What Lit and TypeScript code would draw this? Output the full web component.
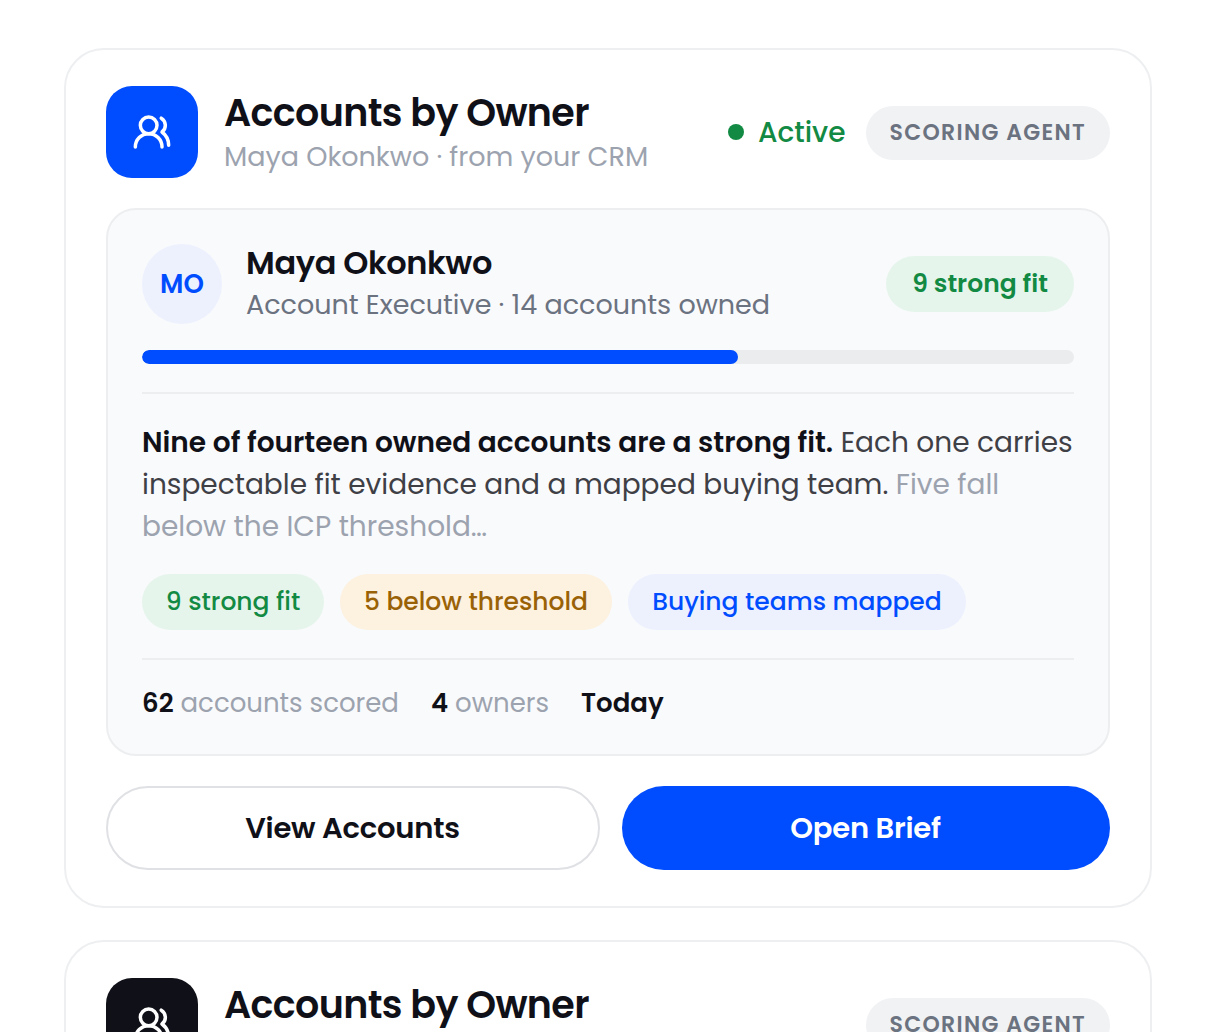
import { LitElement, html, css } from 'lit';
import { customElement, property } from 'lit/decorators.js';
import { classMap } from 'lit/directives/class-map.js';

const OWNER = {
  initials: 'MO',
  name: 'Maya Okonkwo',
  role: 'Account Executive · 14 accounts owned',
  progress: 64,
};

const CHIPS = [
  { tone: 'green', label: '9 strong fit' },
  { tone: 'amber', label: '5 below threshold' },
  { tone: 'blue', label: 'Buying teams mapped' },
];

@customElement('owner-card')
export class OwnerCard extends LitElement {
  static styles = css`
  :host {
    display: block;
    box-sizing: border-box;
    padding: 36px 40px;
    border: 2px solid #eeeff1;
    border-radius: 40px;
    background: #fff;
  }

  * {
    box-sizing: border-box;
  }

  .header {
    display: flex;
    align-items: center;
    height: 92px;
    margin-bottom: 30px;
  }

  .tile {
    display: flex;
    align-items: center;
    justify-content: center;
    flex: none;
    width: 92px;
    height: 92px;
    margin-right: 26px;
    border-radius: 26px;
    background: #004dff;
  }

  .tile.dark {
    background: #101118;
  }

  .heading {
    flex: 1;
    white-space: nowrap;
  }

  .title {
    font-size: 38px;
    line-height: 50px;
    font-weight: 600;
    letter-spacing: -0.0165em;
  }

  .subtitle {
    font-size: 27px;
    line-height: 38px;
    color: #9ca3af;
  }

  .status {
    display: flex;
    align-items: center;
    gap: 14px;
    margin: 2px 20px 0 0;
    font-size: 28px;
    font-weight: 500;
    color: #128a43;
  }

  .dot {
    width: 16px;
    height: 16px;
    margin-bottom: 2px;
    border-radius: 50%;
    background: #128a43;
  }

  .badge {
    display: flex;
    align-items: center;
    height: 54px;
    margin-top: 2px;
    padding: 0 24px 1px;
    border-radius: 27px;
    background: #f1f2f4;
    color: #6b7280;
    font-size: 22px;
    font-weight: 600;
    letter-spacing: 0.06em;
    white-space: nowrap;
  }

  .panel {
    height: 548px;
    padding: 34px;
    border: 2px solid #edeef0;
    border-radius: 30px;
    background: #f9fafc;
  }

  .owner {
    display: flex;
    align-items: center;
    height: 80px;
  }

  .avatar {
    display: flex;
    align-items: center;
    justify-content: center;
    width: 80px;
    height: 80px;
    margin-right: 24px;
    border-radius: 50%;
    background: #edf1fe;
    color: #004dff;
    font-size: 26px;
    font-weight: 600;
  }

  .name {
    font-size: 32px;
    line-height: 40px;
    font-weight: 600;
    letter-spacing: -0.012em;
  }

  .role {
    padding-top: 1px;
    margin-bottom: -1px;
    font-size: 27px;
    line-height: 42px;
    color: #6b7280;
  }

  .track {
    height: 14px;
    margin: 26px 0 28px;
    border-radius: 7px;
    background: #ebecee;
    overflow: hidden;
  }

  .fill {
    height: 100%;
    border-radius: 7px;
    background: #004dff;
  }

  .brief {
    padding-top: 28px;
    border-top: 2px solid #edeef0;
    font-size: 28px;
    line-height: 42px;
    color: #3f4046;
    white-space: nowrap;
  }

  .brief b {
    font-weight: 600;
    color: #101118;
  }

  .brief .muted {
    color: #9ca3af;
  }

  .chips {
    display: flex;
    gap: 16px;
    margin: 26px 0 28px;
  }

  .chip {
    display: flex;
    align-items: center;
    justify-content: center;
    height: 56px;
    padding-bottom: 1px;
    border-radius: 28px;
    font-size: 25px;
    font-weight: 500;
    white-space: nowrap;
  }

  .chip.green {
    width: 182px;
    background: #e6f5ec;
    color: #128a43;
  }

  .chip.amber {
    width: 272px;
    background: #fdf1df;
    color: #9a6206;
  }

  .chip.blue {
    width: 338px;
    background: #edf1fe;
    color: #004dff;
  }

  .chip.score {
    width: 188px;
    font-weight: 600;
  }

  .stats {
    display: flex;
    gap: 32px;
    padding-top: 24px;
    border-top: 2px solid #edeef0;
    font-size: 26px;
    line-height: 38px;
    color: #9ca3af;
  }

  .stats b {
    font-weight: 600;
    color: #101118;
  }

  .actions {
    display: grid;
    grid-template-columns: 494fr 488fr;
    gap: 22px;
    margin-top: 30px;
  }

  .button {
    height: 84px;
    padding: 1px 1px 0 0;
    border: 2px solid #e0e1e5;
    border-radius: 42px;
    background: #fff;
    color: #101118;
    font: inherit;
    font-size: 29px;
    font-weight: 600;
    letter-spacing: -0.008em;
  }

  .button.primary {
    border: none;
    background: #004dff;
    color: #fff;
  }
  `;

  @property({ type: Boolean }) active = false;

  renderHeader() {
    return html`
      <div class="header">
        <div class=${classMap({ tile: true, dark: !this.active })}>
          <svg width="40" height="40" viewBox="0 0 24 24" fill="none" stroke="#fff" stroke-width="2.1" stroke-linecap="round" stroke-linejoin="round">
            <path d="M18 21a8 8 0 0 0-16 0"></path>
            <circle cx="10" cy="8" r="5"></circle>
            <path d="M22 20c0-3.37-2-6.5-4-8a5 5 0 0 0-.45-8.3"></path>
          </svg>
        </div>
        <div class="heading">
          <div class="title">Accounts by Owner</div>
          <div class="subtitle">${OWNER.name} · from your CRM</div>
        </div>
        ${this.active ? html`<div class="status"><span class="dot"></span>Active</div>` : ''}
        <div class="badge">SCORING AGENT</div>
      </div>`;
  }

  render() {
    return html`
      ${this.renderHeader()}
      <div class="panel">
        <div class="owner">
          <div class="avatar">${OWNER.initials}</div>
          <div class="heading">
            <div class="name">${OWNER.name}</div>
            <div class="role">${OWNER.role}</div>
          </div>
          <div class="chip green score">9 strong fit</div>
        </div>
        <div class="track"><div class="fill" style="width: ${OWNER.progress}%"></div></div>
        <div class="brief">
          <b>Nine of fourteen owned accounts are a strong fit.</b> Each one carries<br>
          inspectable fit evidence and a mapped buying team. <span class="muted">Five fall<br>
          below the ICP threshold…</span>
        </div>
        <div class="chips">
          ${CHIPS.map(chip => html`<div class="chip ${chip.tone}">${chip.label}</div>`)}
        </div>
        <div class="stats">
          <span><b>62</b> accounts scored</span>
          <span><b>4</b> owners</span>
          <b>Today</b>
        </div>
      </div>
      <div class="actions">
        <button class="button">View Accounts</button>
        <button class="button primary">Open Brief</button>
      </div>
    `;
  }
}

@customElement('app-root')
export class AppRoot extends LitElement {
  static styles = css`
  :host {
    display: flex;
    flex-direction: column;
    gap: 32px;
    box-sizing: border-box;
    height: 1032px;
    padding: 48px 64px 0;
    overflow: hidden;
    background: #fff;
    color: #101118;
    font-family: Poppins, Inter, sans-serif;
  }

  owner-card {
    flex: none;
  }
  `;

  render() {
    return html`
      <owner-card active></owner-card>
      <owner-card></owner-card>
    `;
  }
}
